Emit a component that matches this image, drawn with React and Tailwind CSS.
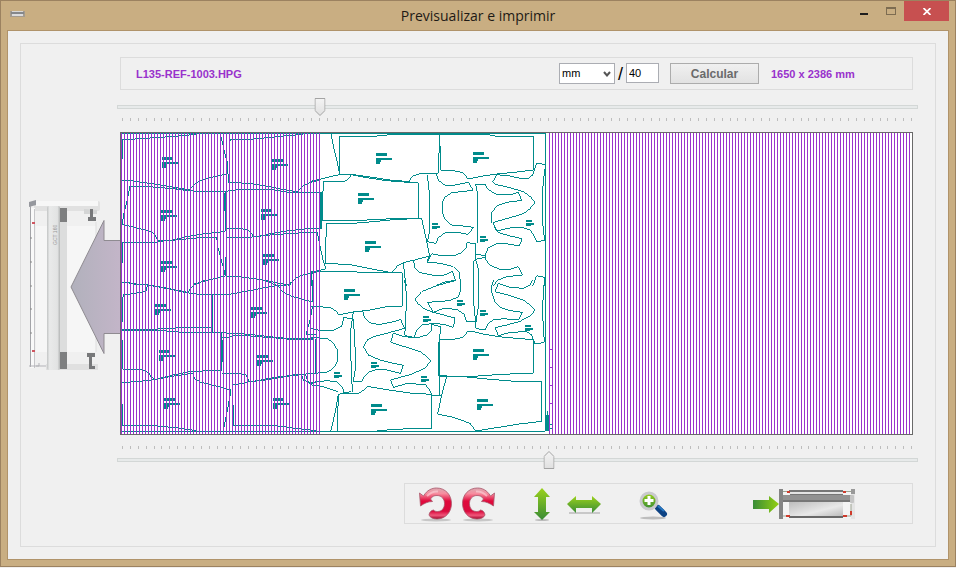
// Ventana «Previsualizar e imprimir»: vista previa del marcador y envío al plotter.
import { useState } from "react";

const FONT = "font-['Liberation_Sans',Arial,sans-serif]";

/* ------------------------------ datos del trazo ----------------------------- */
// El trazo se guarda en cuatro sectores; tres unidades equivalen a un píxel.
const SECTORS = [
  {
    at: "translate(116 126) scale(0.33333)",
    d: [
      "M19 100V40H56L58 37H90L130 34 180 31 230 26 250 23",
      "M312 23L318 45 325 75 330 95M336 105V143L338 170H352L400 172 450 180 500 190 545 198",
      "M336 143L300 151 265 160 240 170 228 184 220 192 170 188 110 183 42 181L36 210 30 238 22 270 19 295",
      "M16 163H40L100 172 150 180 218 191M180 190L240 196H330L370 190H460L520 199H615",
      "M330 196V316M327 200V256M343 45V40H400L455 35 500 30 560 25",
      "M545 198L560 180 580 170 610 162M615 199V307L580 307 520 314 470 322 432 330",
      "M330 307H375L400 314 412 330M330 334H400L470 326 550 321 605 319",
      "M19 295L60 305 90 313 115 322 125 345H160L210 332 260 324 328 316",
      "M19 412V350H110L140 345 200 340 250 335H302L306 365 314 395 322 425 328 450M328 393V450",
      "M328 450L370 452 430 460 480 470 520 478M328 450L300 457 262 465 232 478",
      "M520 478L540 455 560 447 600 440M16 471H40L60 475H80L110 478",
    ],
  },
  {
    at: "translate(116 280) scale(0.33333)",
    d: [
      "M16 8H40L80 15H95L150 25 210 38M95 15L130 20 180 30 215 37 235 12 270 2",
      "M95 15L90 33 60 40 22 45 19 60V125M210 38L250 43H340L400 32 450 22 485 17 515 15 525 5",
      "M440 0L485 17 500 35 530 50 590 66M290 43V160",
      "M16 148H90L160 146 200 142H290M16 152H140L200 157 250 159H330L350 160 400 163 460 170 520 176H590",
      "M318 160V270L220 275 170 285 120 298M318 172H340L350 168H400L470 173 520 178H590",
      "M600 178V280L540 284 480 292 405 305M321 180V245",
      "M19 180V258L22 270H80L100 280 105 290 120 298 160 290 230 280 235 295 255 307 300 318 345 330 338 370 330 410 322 452",
      "M16 308L80 303 120 298M318 280H370L390 285 400 305 380 311 350 314",
      "M400 305L450 300 520 288 556 284 562 300 590 312M568 284L580 312 600 306",
      "M19 372V436H100L180 443 240 452M352 375V436H470L540 445 600 452M16 454H600",
      "M590 0V66M590 78L582 120 570 165M570 165H600",
    ],
  },
  {
    at: "translate(310 126) scale(0.33333)",
    d: [
      "M-566 22H706V480M63 23L70 60 80 100 88 140M88 146V31H190L240 26H388V60L384 143H330L305 152 298 167",
      "M390 60L393 132 430 134 460 140 472 157H485L520 150 560 144 620 138 670 132V31H560L540 27H388",
      "M0 166L30 160 60 152 88 146 130 146 180 153 240 162 298 167",
      "M125 146L110 163 95 168H40L36 283 60 285H130L200 280 260 278H335L342 310 350 345 358 385 352 408",
      "M125 146L170 155 230 164 280 168 325 170V277M49 292H130L190 287 250 281 330 277",
      "M49 292L46 412 120 416 180 428 245 440 262 420 280 410 310 403 360 390",
      "M0 199H35V307H0M0 319H22L30 360 40 405 48 428 0 440M0 437H120L200 441H277V480M4 440V480",
      "M352 148L358 200V320L352 347 378 352 385 335 405 320 440 319 475 325 490 304 460 300 425 297 405 280 397 260V230L405 213 425 200 490 193 475 169 430 178H405L385 163 380 145",
      "M497 175H525L533 190 560 205 600 207 625 199 635 223 590 229 560 240 545 260V290",
      "M497 175L502 200V350M548 168L560 146 600 150 630 157H655L668 147 673 132 680 112 704 115",
      "M548 168L555 175 600 185 640 197 662 213 675 229 660 248 640 263 600 275 548 290 565 320 600 330 637 338 627 360 590 353H560L535 365 527 385V400L540 418 570 430H600L625 422 637 447 590 452 565 462 548 480",
      "M548 290L560 315 600 306 635 304 660 312 670 325 680 348 704 343M704 130L697 200 698 290 704 345",
      "M352 408L365 383 400 390H430L455 380 468 365 470 350 497 353V400M497 385L527 389M497 400L520 395H527",
      "M497 400L491 405V480M497 400L505 430V480M310 403L315 425 330 440 370 448 405 447 427 436 437 463 405 468 380 478",
      "M352 408L390 412 430 422 448 440 452 480M280 410L284 450 289 480M560 480L565 473 580 476M668 480L680 449 704 454V480",
    ],
  },
  {
    at: "translate(310 280) scale(0.33333)",
    d: [
      "M706 0V454H0M277 0V79L230 80 180 90 130 96 85 105 80 95 60 82 0 79",
      "M0 145L30 151H70L95 138 102 112 127 117M130 96L122 150V220L127 335M130 117L133 160 136 220V265L130 305",
      "M158 93L163 112 180 128 205 134 250 125 272 119 284 145M284 0L290 50 286 140 284 165",
      "M284 145L230 160 190 170 172 180 160 200 175 225 210 240 250 250 280 256 272 280 230 270 200 269 178 275 162 292 155 305H130",
      "M100 340H145L162 330 172 319 200 324 250 332 300 339 365 343V445L280 447 200 452M82 454L85 343 122 335",
      "M0 173L50 175 70 188 82 210V245L70 265 50 277 0 281M16 178V280",
      "M0 308L50 302 80 305 98 322 102 340M0 314L40 320 85 335M85 343L75 400 62 454",
      "M452 0V30L445 50 420 62 352 67 370 97 435 114 430 142 400 133 370 130 335 135 320 150 312 172 284 167",
      "M435 2L380 17 335 35 315 58 325 72 345 88 370 97 400 85 440 88 462 103 470 125H497",
      "M491 0V70L497 125V145L525 150 535 130 550 120 580 116 625 120 637 97 600 92 570 82 555 65 546 40V15L552 0",
      "M505 0V80L498 125M555 35L565 10 600 22 640 25 660 15 668 0",
      "M555 35L600 47 640 60 660 75 675 91 660 108 630 124 590 135 555 143 565 167 600 157 650 155 665 165 675 192 703 187M703 0L697 90 703 187",
      "M284 170L320 174 350 165 365 150V133L393 140L385 200 387 287H410",
      "M284 170L250 160 242 187 300 205 335 217 362 242 345 265 300 284 242 300 250 322 290 311 345 313 358 328 367 348H392",
      "M390 178H430L460 172 472 155 485 154 520 162 565 170 620 175 670 179V280L600 282 530 286 480 290H387M390 178V348",
      "M410 289L395 345 383 402 430 412 480 430 497 453 560 443 620 433 695 424V305L600 303 530 297 470 291",
      "M712 392V454M715 405V452M709 405V452M718 435H727M718 445H727",
    ],
  },
];

const LABELS = [
  [162, 157], [272, 159], [161, 210], [261, 209], [161, 261], [263, 254],
  [155, 304], [251, 307], [159, 350], [257, 355], [164, 398], [273, 398],
  [376, 153], [473, 152], [358, 193], [365, 241], [344, 289], [473, 349],
  [371, 404], [477, 399],
];

const SMALL_LABELS = [
  [432, 223], [480, 236], [526, 220], [457, 300], [423, 316], [480, 310],
  [525, 325], [371, 362], [421, 376], [334, 372],
];

/* --------------------------------- vista previa ----------------------------- */
function Preview({ from, to }) {
  const x1 = Math.round(122 + from * 7.9);
  const x2 = Math.round(122 + to * 7.9);
  return (
    <svg
      viewBox="121 133 791 301"
      className="block w-full"
      shapeRendering="crispEdges"
      role="img"
      aria-label="Vista previa"
    >
      <defs>
        <pattern id="skipL" x="121" y="0" width="3" height="9" patternUnits="userSpaceOnUse">
          <rect width="1" height="9" fill="#9932cc" />
        </pattern>
        <pattern id="skipR" x="549" y="0" width="3" height="9" patternUnits="userSpaceOnUse">
          <rect width="1" height="9" fill="#9932cc" />
        </pattern>
      </defs>
      <g fill="none" stroke="#008b8b">
        {SECTORS.map((s) => (
          <g key={s.at} transform={s.at}>
            <path d={s.d.join("")} strokeWidth="3" />
          </g>
        ))}
      </g>
      <g fill="#008b8b">
        {LABELS.map(([x, y]) => (
          <path
            key={`${x}-${y}`}
            transform={`translate(${x} ${y})`}
            d="M0 0h11v3H0zM0 5h16v2H5v2H4v2H0z"
          />
        ))}
        {SMALL_LABELS.map(([x, y]) => (
          <path
            key={`${x}-${y}`}
            transform={`translate(${x} ${y})`}
            d="M0 0h6v2H0zM0 3h8v2H5v1H0z"
          />
        ))}
      </g>
      <rect x="121" y="133" width={x1 - 121} height="301" fill="url(#skipL)" />
      <rect x={x2} y="133" width={912 - x2} height="301" fill="url(#skipR)" />
      <path d="M549 349h3M549 367h3M549 385h3M549 403h3" stroke="#9932cc" />
    </svg>
  );
}

/* --------------------------------- deslizador ------------------------------- */
function Ticks() {
  return (
    <div className="ml-[2px] flex h-[3px] justify-between">
      {Array.from({ length: 101 }, (_, i) => (
        <span key={i} className="w-px bg-[#bdbdbd]" />
      ))}
    </div>
  );
}

function Slider({ label, value, onChange, up }) {
  return (
    <div className="relative -mr-[5px] -ml-[3px] flex h-[18px] items-center">
      <input
        type="range"
        aria-label={label}
        value={value}
        onChange={(e) => onChange(Number(e.target.value))}
        className="m-0 h-1 w-full cursor-pointer appearance-none border border-[#d3d7d6] bg-[#e7eaea] [&::-webkit-slider-thumb]:h-[18px] [&::-webkit-slider-thumb]:w-[11px] [&::-webkit-slider-thumb]:appearance-none [&::-webkit-slider-thumb]:opacity-0"
      />
      <div className="pointer-events-none absolute inset-y-0 right-[6px] left-[5px]">
        <svg
          viewBox="0 0 11 18"
          className="absolute top-0 h-[18px] w-[11px] -translate-x-1/2"
          style={{ left: `${value}%` }}
        >
          <defs>
            <linearGradient id="knob" x2="0" y2="1">
              <stop stopColor="#f4f4f4" />
              <stop offset="1" stopColor="#e0e0e0" />
            </linearGradient>
          </defs>
          <path
            d={up ? "M.5 17.5V5.5L5.5.5l5 5v12z" : "M.5.5h10v12l-5 5-5-5z"}
            fill="url(#knob)"
            stroke="#a3a3a3"
          />
        </svg>
      </div>
    </div>
  );
}

/* ----------------------------------- iconos --------------------------------- */
function PlotterSide() {
  return (
    <svg viewBox="21 190 99 190" className="block h-[190px] w-[99px]" aria-hidden="true">
      <defs>
        <linearGradient id="rail">
          <stop stopColor="#c2c4c4" />
          <stop offset=".2" stopColor="#e9eaea" />
          <stop offset=".8" stopColor="#e2e3e3" />
          <stop offset="1" stopColor="#b4b6b6" />
        </linearGradient>
        <linearGradient id="arrowL">
          <stop stopColor="#b1b1bc" />
          <stop offset="1" stopColor="#c3b5c8" />
        </linearGradient>
      </defs>
      <rect x="34" y="201" width="66" height="10" rx="2" fill="#e1e1e1" />
      <rect x="36" y="201" width="62" height="5" fill="#f7f7f7" />
      <path d="M29 202l7-2v5l-7 2z" fill="#96989e" />
      <rect x="36" y="226" width="60" height="126" fill="#f6f6f6" />
      <path d="M96 222v130" stroke="#dedede" />
      <rect x="30" y="208" width="5" height="160" fill="#f9f9f9" />
      <path d="M30.500 206v161" stroke="#a3a4a8" />
      <path d="M34.500 209v159" stroke="#c6c6c9" />
      <path d="M30 238h2M30 262h2M30 286h2M30 309h2M30 333h2" stroke="#888" />
      <path d="M32 223h3M32 351h3" stroke="#cf5560" strokeWidth="2" />
      <path d="M29 366h10v-3M36 366h60" stroke="#b3b3b8" fill="none" />
      <rect x="46" y="364" width="52" height="6" fill="#e0e0e0" />
      <rect x="60" y="208" width="7" height="14" fill="#7e7f80" />
      <rect x="60" y="352" width="7" height="17" fill="#7e7f80" />
      <rect x="60" y="222" width="7" height="130" fill="#dcdddd" />
      <rect x="47" y="206" width="13" height="164" rx="2" fill="url(#rail)" />
      <text transform="translate(57 245) rotate(-90)" fontSize="5" fill="#999">
        GCT 160
      </text>
      <path d="M84 209v5h13v-4z" fill="#d4d5d5" />
      <path d="M90 209h3v8h3v4h-8v-4h2zM87 353h8v4h-3v9h3v3h-6v-12h-2z" fill="#77787a" />
      <path d="M120.500 240.500H104v-20L71 287l33 66.500v-20h16.500z" fill="url(#arrowL)" stroke="#8f8b91" />
    </svg>
  );
}

function RotateIcon({ flip }) {
  return (
    <svg viewBox="0 0 36 36" className="h-9 w-9" aria-hidden="true">
      <defs>
        <linearGradient id="rot" gradientUnits="userSpaceOnUse" x1="0" y1="2" x2="0" y2="33">
          <stop stopColor="#dba9b1" />
          <stop offset=".18" stopColor="#f78d9f" />
          <stop offset=".42" stopColor="#e00a3c" />
          <stop offset=".75" stopColor="#d90b3e" />
          <stop offset=".88" stopColor="#f0567a" />
          <stop offset="1" stopColor="#a0042a" />
        </linearGradient>
      </defs>
      <ellipse cx="18" cy="34" rx="15" ry="1.500" fill="#b5b5b5" opacity=".7" />
      <g transform={flip ? "translate(36 0) scale(-1 1)" : undefined}>
        <path
          d="M1.500 7l4 3C9 4 14 2 18.500 2c9 0 15 7 15 15.500S27.500 33 19 33c-4 0-7-1.500-8-4 .5-3 2-4.500 4.500-5 1 1 2 1.500 4 1.500 4.500 0 7-3.500 7-8s-3-8-7.500-8c-3 0-5 1-6.500 3.500l2 2.500C10 15.500 6 17.500 2.500 20z"
          fill="url(#rot)"
          stroke="#a8566a"
          strokeWidth=".8"
        />
        <path d="M9 10c3-3 7-5 11-4.500" fill="none" stroke="#fbd3da" strokeWidth="2" opacity=".6" />
      </g>
    </svg>
  );
}

function GreenGradient() {
  return (
    <defs>
      <linearGradient id="green" x2="0" y2="1">
        <stop stopColor="#9bd21c" />
        <stop offset="1" stopColor="#398b36" />
      </linearGradient>
    </defs>
  );
}

function MirrorVIcon() {
  return (
    <svg viewBox="0 0 36 36" className="h-9 w-9" aria-hidden="true">
      <GreenGradient />
      <ellipse cx="18" cy="34" rx="7" ry="1" fill="#bbb" />
      <path d="M18 2l8 9h-4v15h4l-8 8-8-8h4V11h-4z" fill="url(#green)" />
    </svg>
  );
}

function MirrorHIcon() {
  return (
    <svg viewBox="0 0 36 36" className="h-9 w-9" aria-hidden="true">
      <GreenGradient />
      <path d="M3 27h31" stroke="#c8c8c8" strokeWidth="2" />
      <path d="M1 18l9-8v4h16v-4l9 8-9 9v-5H10v5z" fill="url(#green)" />
    </svg>
  );
}

function ZoomIcon() {
  return (
    <svg viewBox="0 0 36 36" className="h-9 w-9" aria-hidden="true">
      <GreenGradient />
      <ellipse cx="17" cy="32" rx="13" ry="1.500" fill="#bdbdbd" />
      <path d="M22 22l6 6" stroke="#0d4384" strokeWidth="6" strokeLinecap="round" />
      <path d="M22 20l6 5" stroke="#2776c0" strokeWidth="2" />
      <circle cx="13" cy="15" r="8" fill="url(#green)" stroke="#c9c9cd" strokeWidth="3" />
      <path d="M13 10v9M8.500 14.500h9" stroke="#fff" strokeWidth="3" />
    </svg>
  );
}

function PrintIcon() {
  return (
    <svg viewBox="752 485 104 36" className="h-9 w-[104px]" aria-hidden="true">
      <defs>
        <linearGradient id="go">
          <stop stopColor="#398c38" />
          <stop offset="1" stopColor="#94d011" />
        </linearGradient>
        <linearGradient id="sheet" x2="1" y2="1">
          <stop stopColor="#bdbdbd" />
          <stop offset=".6" stopColor="#e8e8e8" />
          <stop offset="1" stopColor="#bcbcbc" />
        </linearGradient>
      </defs>
      <path d="M753 499h16v-4l10 8-10 9v-4h-16z" fill="url(#go)" />
      <rect x="782" y="490" width="70" height="27" fill="#f4f4f4" />
      <rect x="789" y="489" width="54" height="2" fill="#777" />
      <rect x="789" y="491" width="54" height="2" fill="#e5e5e5" />
      <rect x="790" y="493" width="53" height="2" fill="#777" />
      <rect x="781" y="494" width="73" height="7" fill="#929292" />
      <rect x="781" y="499" width="73" height="2" fill="#777" />
      <rect x="789" y="501" width="54" height="14" fill="url(#sheet)" />
      <rect x="789" y="515" width="54" height="2" fill="#686868" />
      <rect x="779" y="488" width="4" height="30" fill="#858585" />
      <rect x="851" y="488" width="4" height="30" fill="#e4e4e4" />
      <rect x="851" y="488" width="4" height="5" fill="#999" />
      <rect x="850" y="494" width="4" height="8" rx="1" fill="#c5c5c5" />
      <path d="M783 490.500h4M846 490.500h5M783 515h4M846 515h5v-12" stroke="#9da392" fill="none" />
      <path d="M787 491h3M843 491h3M786 515h4M843 515h4M851 510v4" stroke="#cf3b2c" strokeWidth="2" />
    </svg>
  );
}

/* ----------------------------------- ventana -------------------------------- */
function TitleBar() {
  return (
    <header className="grid h-[29px] grid-cols-[1fr_auto_1fr]">
      <svg viewBox="0 0 15 6" className="mt-[10px] ml-[9px] h-[6px] w-[15px]" aria-hidden="true">
        <rect width="15" height="6" fill="#a49b8f" />
        <rect x="2" width="11" height="1" fill="#d8d8d8" />
        <rect x="1" y="1" width="13" height="2" fill="#85878b" />
        <rect x="2" y="3" width="11" height="2" fill="#dcdcde" />
      </svg>
      <h1 className="self-center font-['Open_Sans','Noto_Sans',sans-serif] text-[14px] leading-5 text-[#1e1a16]">
        Previsualizar e imprimir
      </h1>
      <div className="flex justify-end pr-[6px]">
        <button type="button" aria-label="Minimizar" className="flex h-5 w-[27px] items-end justify-center pb-[6px]">
          <span className="h-[2px] w-2 bg-[#1e1e1e]" />
        </button>
        <button type="button" aria-label="Maximizar" className="flex h-5 w-[27px] items-center justify-center">
          <span className="h-2 w-[10px] border border-t-2 border-[#7d6c51]" />
        </button>
        <button type="button" aria-label="Cerrar" className="flex h-5 w-[45px] items-center justify-center bg-[#c75050]">
          <svg viewBox="0 0 8 7" className="h-[7px] w-2" aria-hidden="true">
            <path d="M.5 0l7 7M7.500 0l-7 7" stroke="#fff" strokeWidth="1.700" />
          </svg>
        </button>
      </div>
    </header>
  );
}

export default function App() {
  const [from, setFrom] = useState(25);
  const [to, setTo] = useState(54);
  const [unit, setUnit] = useState("mm");
  const [scale, setScale] = useState("40");

  return (
    <div className={`min-h-screen bg-[#f1efee] ${FONT}`}>
      <div className="border border-[#9c8260] bg-[#c9ae82]">
        <TitleBar />
        <main className="mx-[6px] mb-[6px] border border-[#b0936a] bg-[#f0f0f0] p-3">
          <div className="flex border border-[#dcdcdc] pt-[13px] pr-[22px] pb-[22px]">
            <div className="w-[99px] shrink-0 pt-[133px]">
              <PlotterSide />
            </div>

            <div className="min-w-0 flex-1">
              <div className="flex h-[33px] items-center border border-[#dcdcdc] pl-[15px]">
                <span className="text-[11px] leading-4 font-bold text-[#9932cc]">L135-REF-1003.HPG</span>
                <div className="ml-auto flex items-center">
                  <div className="relative">
                    <select
                      aria-label="Unidad"
                      value={unit}
                      onChange={(e) => setUnit(e.target.value)}
                      className="block h-[21px] w-14 appearance-none border border-[#abadb3] bg-white pl-[2px] text-[11px] text-black"
                    >
                      <option>mm</option>
                      <option>cm</option>
                      <option>in</option>
                    </select>
                    <svg viewBox="0 0 8 6" className="pointer-events-none absolute top-2 right-1 h-[6px] w-2" aria-hidden="true">
                      <path d="M1 1l3 3.500L7 1" fill="none" stroke="#555" strokeWidth="2" />
                    </svg>
                  </div>
                  <span className="w-[11px] text-center text-[18px] leading-5 text-black">/</span>
                  <input
                    type="text"
                    aria-label="Escala"
                    value={scale}
                    onChange={(e) => setScale(e.target.value)}
                    className="h-5 w-[33px] self-start border border-[#abadb3] bg-white px-[2px] text-[11px] text-black"
                  />
                  <button
                    type="button"
                    className="ml-[11px] h-[21px] w-[89px] border border-[#acacac] bg-linear-to-b from-[#f0f0f0] to-[#e2e2e2] text-[12px] leading-4 font-bold text-[#6b6b6b]"
                  >
                    Calcular
                  </button>
                  <output className="ml-3 w-[141px] text-[11px] leading-4 font-bold text-[#9932cc]">
                    1650 x 2386 {unit}
                  </output>
                </div>
              </div>

              <div className="mt-2">
                <Slider label="Inicio" value={from} onChange={setFrom} />
              </div>
              <div className="mt-[2px] mb-[11px]">
                <Ticks />
              </div>
              <div className="border border-[#696969] bg-white">
                <Preview from={from} to={to} />
              </div>
              <div className="mt-[11px] mb-[2px]">
                <Ticks />
              </div>
              <Slider label="Fin" value={to} onChange={setTo} up />

              <div className="mt-[14px] ml-auto flex h-[41px] w-[509px] items-center border border-[#dcdcdc] pl-[13px]">
                <button type="button" aria-label="Girar a la izquierda">
                  <RotateIcon />
                </button>
                <button type="button" aria-label="Girar a la derecha" className="ml-[6px]">
                  <RotateIcon flip />
                </button>
                <button type="button" aria-label="Reflejar en vertical" className="ml-7">
                  <MirrorVIcon />
                </button>
                <button type="button" aria-label="Reflejar en horizontal" className="ml-[6px]">
                  <MirrorHIcon />
                </button>
                <button type="button" aria-label="Ampliar" className="ml-[34px]">
                  <ZoomIcon />
                </button>
                <button type="button" aria-label="Imprimir" className="ml-20">
                  <PrintIcon />
                </button>
              </div>
            </div>
          </div>
        </main>
      </div>
    </div>
  );
}
